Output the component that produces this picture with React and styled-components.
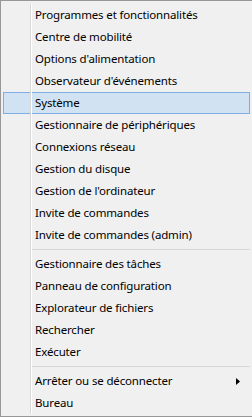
import styled, { createGlobalStyle } from "styled-components";

const GlobalStyle = createGlobalStyle`
    html, body {
        margin: 0;
        padding: 0;
        background: #f0f0f0;
    }
`;

const groups = [
    [
        "Programmes et fonctionnalités",
        "Centre de mobilité",
        "Options d'alimentation",
        "Observateur d'événements",
        "Système",
        "Gestionnaire de périphériques",
        "Connexions réseau",
        "Gestion du disque",
        "Gestion de l'ordinateur",
        "Invite de commandes",
        "Invite de commandes (admin)",
    ],
    [
        "Gestionnaire des tâches",
        "Panneau de configuration",
        "Explorateur de fichiers",
        "Rechercher",
        "Exécuter",
    ],
    [
        "Arrêter ou se déconnecter",
        "Bureau",
    ],
];

function App() {
    const selected = "Système";
    const withArrow = "Arrêter ou se déconnecter";

    return (
        <>
            <GlobalStyle />
            <Menu>
                {groups.map((group, i) => (
                    <Group key={i}>
                        {i > 0 && <Separator />}
                        {group.map((label) => (
                            <Item key={label} $active={label === selected}>
                                <span>{label}</span>
                                {label === withArrow && (
                                    <Arrow width="4" height="7" viewBox="0 0 4 7">
                                        <polygon points="0,0 4,3.5 0,7" fill="#000" />
                                    </Arrow>
                                )}
                            </Item>
                        ))}
                    </Group>
                ))}
            </Menu>
        </>
    );
}

export default App;

const Menu = styled.div`
    position: relative;
    width: 252px;
    height: 417px;
    box-sizing: border-box;
    background: #f0f0f0;
    border-top: 1px solid #979797;
    border-bottom: 1px solid #979797;
    border-left: 1px solid #979797;
    padding: 3px 2px 2px 2px;
    font-family: "Noto Sans", "Liberation Sans", sans-serif;
    font-size: 11.5px;
    letter-spacing: -0.15px;
    color: #000000;

    &::after{
        content: "";
        position: absolute;
        left: 29px;
        top: 3px;
        bottom: 2px;
        width: 1px;
        background: #d7d7d7;
        box-shadow: 1px 0 0 #ffffff;
        pointer-events: none;
    }
`;

const Group = styled.div`
    display: flex;
    flex-direction: column;
`;

const Item = styled.div`
    height: 22px;
    box-sizing: border-box;
    display: flex;
    align-items: center;
    padding: 0 9px 1px 31px;
    border: 1px solid ${(p) => (p.$active ? "#7eaee3" : "transparent")};
    background: ${(p) => (p.$active ? "#d1e2f2" : "transparent")};
    white-space: nowrap;

    span{
        flex: 1;
    }
`;

const Arrow = styled.svg`
    display: block;
    flex-shrink: 0;
    margin-top: 1px;
`;

const Separator = styled.div`
    height: 1px;
    margin: 3px 0 3px 28px;
    background: #d7d7d7;
`;
